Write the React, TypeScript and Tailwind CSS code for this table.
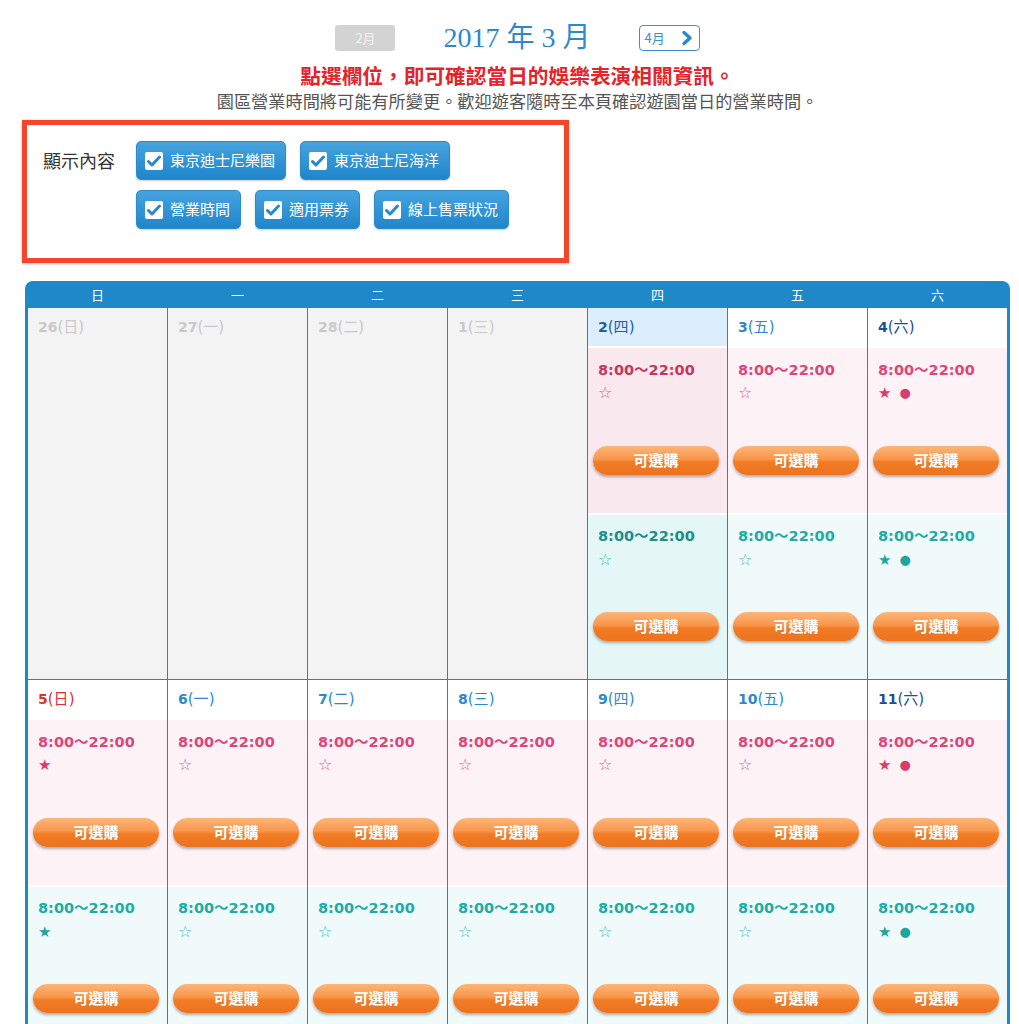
import React from "react";

const CJK = { fontFamily: '"Noto Sans CJK TC", "Noto Sans", sans-serif' };
const NUM = { fontFamily: '"DejaVu Sans", "Noto Sans CJK TC", sans-serif' };

type Mark = "empty" | "star" | "starDot";

type Day = {
  num: number;
  wd: string;
  past?: boolean;
  today?: boolean;
  pink?: Mark;
  teal?: Mark;
};

const WEEKDAYS = ["日", "一", "二", "三", "四", "五", "六"];

const WEEKS: Day[][] = [
  [
    { num: 26, wd: "日", past: true },
    { num: 27, wd: "一", past: true },
    { num: 28, wd: "二", past: true },
    { num: 1, wd: "三", past: true },
    { num: 2, wd: "四", today: true, pink: "empty", teal: "empty" },
    { num: 3, wd: "五", pink: "empty", teal: "empty" },
    { num: 4, wd: "六", pink: "starDot", teal: "starDot" },
  ],
  [
    { num: 5, wd: "日", pink: "star", teal: "star" },
    { num: 6, wd: "一", pink: "empty", teal: "empty" },
    { num: 7, wd: "二", pink: "empty", teal: "empty" },
    { num: 8, wd: "三", pink: "empty", teal: "empty" },
    { num: 9, wd: "四", pink: "empty", teal: "empty" },
    { num: 10, wd: "五", pink: "empty", teal: "empty" },
    { num: 11, wd: "六", pink: "starDot", teal: "starDot" },
  ],
];

const FILTERS = [
  ["東京迪士尼樂園", "東京迪士尼海洋"],
  ["營業時間", "適用票券", "線上售票狀況"],
];

function CheckBox() {
  return (
    <span className="flex h-[18px] w-[18px] items-center justify-center rounded-[2px] bg-white">
      <svg width="14" height="12" viewBox="0 0 14 12">
        <path
          d="M1.5 6.5 L5 10 L12.5 2"
          fill="none"
          stroke="#2a88d0"
          strokeWidth="3"
          strokeLinecap="round"
          strokeLinejoin="round"
        />
      </svg>
    </span>
  );
}

function FilterButton({ label }: { label: string }) {
  return (
    <span className="flex h-[39px] items-center gap-[7px] rounded-[5px] border border-[#2b8bcc] bg-[linear-gradient(to_bottom,#46a3de,#1f86cb)] pl-[8px] pr-[10px] text-[15px] text-white shadow-[0_1px_2px_rgba(0,0,0,0.2)]">
      <CheckBox />
      {label}
    </span>
  );
}

function BuyButton() {
  return (
    <div
      className="ml-[5px] flex h-[29px] w-[126px] items-center justify-center rounded-full bg-[linear-gradient(to_bottom,#fcb679_0%,#f8964c_45%,#f27c25_55%,#ec721e_100%)] text-[15px] font-bold text-white shadow-[0_2px_3px_rgba(0,0,0,0.3)]"
      style={CJK}
    >
      可選購
    </div>
  );
}

function Marks({ mark, color }: { mark: Mark; color: string }) {
  if (mark === "empty") {
    return <span className={`text-[16px] ${color}`}>☆</span>;
  }
  return (
    <span className={`flex items-center gap-[8px] ${color}`}>
      <span className="text-[15px]">★</span>
      {mark === "starDot" && <span className="text-[13px]">●</span>}
    </span>
  );
}

function DayCell({ day }: { day: Day }) {
  let dateColor = "text-[#2a8ad0]";
  if (day.past) dateColor = "text-[#c9c9c9]";
  else if (day.today) dateColor = "text-[#1d5ea9]";
  else if (day.wd === "日") dateColor = "text-[#e12f30]";
  else if (day.wd === "六") dateColor = "text-[#1c4f92]";

  return (
    <div className={day.past ? "bg-[#f3f3f3]" : "bg-white"}>
      <div
        className={`flex h-[38px] items-center pl-[10px] ${dateColor} ${
          day.today ? "bg-[#dcedfd]" : ""
        }`}
        style={NUM}
      >
        <span className="text-[14px] font-bold">{day.num}</span>
        <span className="text-[15px] font-normal">({day.wd})</span>
      </div>
      {day.past ? (
        <div className="h-[333px]" />
      ) : (
        <>
          <div
            className={`mt-[2px] flex h-[165px] flex-col pt-[12px] ${
              day.today ? "bg-[#f9e8ee]" : "bg-[#fdf3f7]"
            }`}
          >
            <div
              className={`h-[20px] pl-[10px] text-[14.5px] font-bold leading-[20px] ${
                day.today ? "text-[#c6365f]" : "text-[#df4579]"
              }`}
              style={NUM}
            >
              8:00～22:00
            </div>
            <div className="mt-[3px] flex h-[20px] items-center pl-[10px]" style={NUM}>
              <Marks
                mark={day.pink!}
                color={day.pink === "empty" ? "text-[#e3608d]" : "text-[#d93c6e]"}
              />
            </div>
            <div className="mt-[43px]">
              <BuyButton />
            </div>
          </div>
          <div
            className={`mt-[2px] flex h-[164px] flex-col pt-[11px] ${
              day.today ? "bg-[#e5f6f7]" : "bg-[#f0fafa]"
            }`}
          >
            <div
              className={`h-[20px] pl-[10px] text-[14.5px] font-bold leading-[20px] ${
                day.today ? "text-[#1c8e8a]" : "text-[#22aaa5]"
              }`}
              style={NUM}
            >
              8:00～22:00
            </div>
            <div className="mt-[4px] flex h-[20px] items-center pl-[10px]" style={NUM}>
              <Marks
                mark={day.teal!}
                color={day.teal === "empty" ? "text-[#4fbdb9]" : "text-[#1fa5a1]"}
              />
            </div>
            <div className="mt-[42px]">
              <BuyButton />
            </div>
          </div>
        </>
      )}
    </div>
  );
}

export default function App() {
  return (
    <div className="min-h-screen bg-white pb-4" style={CJK}>
      {/* Month navigation */}
      <div className="ml-[25px] flex w-[985px] flex-col items-center pt-[25px]">
        <div className="flex h-[26px] items-center">
          <span className="flex h-[26px] w-[60px] items-center justify-center rounded-[3px] bg-[#d3d3d3] text-[13px] text-[#f4f4f4]">
            2月
          </span>
          <span
            className="mx-[48px] text-[28px] leading-[26px] text-[#2a8ad0]"
            style={{ fontFamily: '"Liberation Serif", "Noto Sans CJK TC", serif' }}
          >
            2017 年 3 月
          </span>
          <span className="flex h-[26px] w-[61px] items-center justify-between rounded-[4px] border-[1.5px] border-[#3a90d0] bg-white pl-[5px] pr-[6px] text-[13px] text-[#3a8fd0]">
            4月
            <svg width="12" height="16" viewBox="0 0 12 16">
              <path
                d="M3 2.5 L9 8 L3 13.5"
                fill="none"
                stroke="#2a88d0"
                strokeWidth="3.4"
                strokeLinecap="round"
                strokeLinejoin="round"
              />
            </svg>
          </span>
        </div>
        <p className="mt-[11px] text-[20.7px] font-bold leading-[26px] text-[#e3242b]">
          點選欄位，即可確認當日的娛樂表演相關資訊。
        </p>
        <p className="mt-[1px] text-[17.2px] leading-[24px] text-[#555555]">
          園區營業時間將可能有所變更。歡迎遊客隨時至本頁確認遊園當日的營業時間。
        </p>
      </div>

      {/* Display filters */}
      <div className="ml-[22px] mt-[7px] flex h-[143px] w-[547px] border-[5px] border-[#f4452b] pl-[16px] pt-[16px] shadow-[0_1px_3px_rgba(0,0,0,0.25)]">
        <div className="flex h-[39px] w-[93px] items-center text-[18px] text-[#333333]">
          顯示內容
        </div>
        <div className="flex flex-col gap-[10px]">
          {FILTERS.map((row, i) => (
            <div key={i} className="flex gap-[14px]">
              {row.map((f) => (
                <FilterButton key={f} label={f} />
              ))}
            </div>
          ))}
        </div>
      </div>

      {/* Calendar */}
      <div className="ml-[25px] mt-[18px] w-[985px]">
        <div className="grid h-[27px] grid-cols-7 gap-px rounded-t-[8px] bg-[#1e88c9] px-[3px]">
          {WEEKDAYS.map((w) => (
            <div key={w} className="flex items-center justify-center text-[13px] text-white">
              {w}
            </div>
          ))}
        </div>
        <div className="grid grid-cols-7 gap-px border-x-[3px] border-[#1e88c9] bg-[#1e88c9]">
          {WEEKS.flat().map((d) => (
            <DayCell key={`${d.num}-${d.wd}`} day={d} />
          ))}
        </div>
      </div>
    </div>
  );
}
